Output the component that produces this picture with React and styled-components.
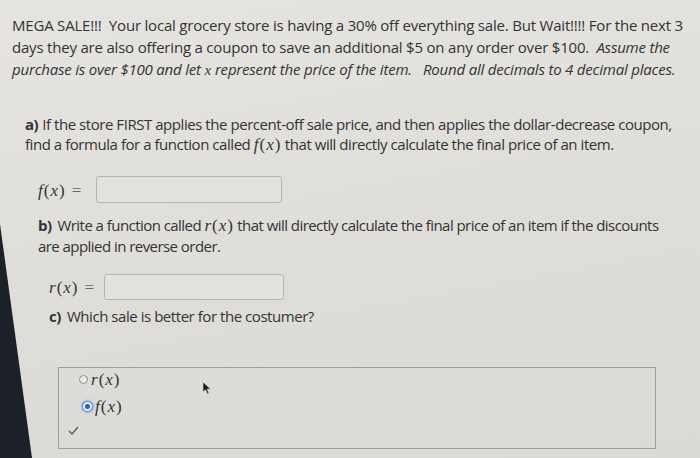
import React from "react";
import styled, { createGlobalStyle } from "styled-components";

const GlobalStyle = createGlobalStyle`
  html, body {
    margin: 0;
    padding: 0;
    background: #e0ded9;
  }
  body {
    font-family: "Open Sans", "Noto Sans", sans-serif;
    color: #333;
  }
`;

const Page = styled.div`
  position: relative;
  width: 700px;
  height: 458px;
  overflow: hidden;
  box-sizing: border-box;
  padding-top: 14px;
  background: linear-gradient(170deg, #e6e4e0 0%, #dfddd8 55%, #dcdad5 100%);
`;

// dark edge of the monitor bezel creeping in on the left of the photo
const Bezel = styled.div`
  position: absolute;
  left: 0;
  top: 0;
  width: 40px;
  height: 458px;
  background: #1c2029;
  clip-path: polygon(0 224px, 32px 458px, 0 458px);
`;

const Intro = styled.div`
  padding-left: 12px;
  font-size: 15px;
  line-height: 22px;
  letter-spacing: -0.2px;
  white-space: nowrap;
`;

const Line = styled.div`
  font-style: ${(p) => (p.$italic ? "italic" : "normal")};
`;

const Em = styled.span`
  font-style: italic;
`;

const Math = styled.span`
  font-family: "Liberation Serif", "DejaVu Serif", serif;
  font-style: italic;
  font-size: ${(p) => p.$size || 17}px;
  letter-spacing: ${(p) => (p.$size ? 0 : 1)}px;
  color: #333;
`;

const Paren = styled.span`
  font-style: normal;
`;

const Part = styled.div`
  margin-top: ${(p) => p.$top}px;
  padding-left: ${(p) => p.$left}px;
  font-size: 15px;
  line-height: 20px;
  letter-spacing: ${(p) => p.$spacing ?? -0.45}px;
  white-space: nowrap;
`;

const Tag = styled.b`
  font-weight: 700;
  margin-right: ${(p) => p.$gap || 3}px;
`;

const AnswerRow = styled.div`
  display: flex;
  align-items: center;
  margin-top: ${(p) => p.$top}px;
  padding-left: ${(p) => p.$left}px;
  height: ${(p) => p.$h}px;
`;

const Label = styled.div`
  width: ${(p) => p.$w}px;
  white-space: nowrap;
  color: #444;
`;

const Eq = styled.span`
  font-family: "Liberation Serif", serif;
  font-size: 17px;
  margin-left: 6px;
  color: #666;
`;

const Input = styled.div`
  box-sizing: border-box;
  width: ${(p) => p.$w}px;
  height: 100%;
  border: 1.5px solid #b5b4b0;
  border-radius: 3px;
  background: #e4e2de;
`;

const ChoiceBox = styled.div`
  position: relative;
  box-sizing: border-box;
  margin: 41px 0 0 58px;
  width: 598px;
  height: 82px;
  border: 1.5px solid #98a197;
  padding: 1px 0 0 20px;
`;

const Option = styled.div`
  display: flex;
  align-items: center;
  gap: 3px;
  height: 21px;
  margin-top: ${(p) => p.$top}px;
  padding-left: ${(p) => p.$indent}px;
`;

const Radio = styled.span`
  box-sizing: border-box;
  width: 9px;
  height: 9px;
  border-radius: 50%;
  border: ${(p) => (p.$on ? "2px solid #e8eefb" : "1px solid #8a8a8a")};
  background: ${(p) => (p.$on ? "#1f5fd6" : "#ecebe8")};
  box-shadow: ${(p) => (p.$on ? "0 0 0 1.5px #6f9ae9, 0 0 3px 2px #a9c3f0" : "none")};
`;

const Check = styled.svg`
  position: absolute;
  left: 9px;
  top: 58px;
`;

const Cursor = styled.svg`
  position: absolute;
  left: 143px;
  top: 13px;
`;

const Fx = ({ name }) => (
  <Math>
    {name}
    <Paren>(</Paren>x<Paren>)</Paren>
  </Math>
);

export default function App() {
  return (
    <>
      <GlobalStyle />
      <Page>
        <Bezel />
        <Intro>
          <Line>
            MEGA SALE!!!&nbsp; Your local grocery store is having a 30% off
            everything sale. But Wait!!!! For the next 3
          </Line>
          <Line>
            days they are also offering a coupon to save an additional $5 on
            any order over $100.&nbsp; <Em>Assume the</Em>
          </Line>
          <Line $italic>
            purchase is over $100 and let <Math $size={15}>x</Math> represent
            the price of the item.&nbsp;&nbsp; Round all decimals to 4 decimal
            places.
          </Line>
        </Intro>

        <Part $top={33} $left={25}>
          <Line>
            <Tag $gap={4}>a)</Tag>If the store FIRST applies the percent-off
            sale price, and then applies the dollar-decrease coupon,
          </Line>
          <Line>
            find a formula for a function called <Fx name="f" /> that will
            directly calculate the final price of an item.
          </Line>
        </Part>

        <AnswerRow $top={21} $left={38} $h={27}>
          <Label $w={58}>
            <Fx name="f" />
            <Eq>=</Eq>
          </Label>
          <Input $w={186} />
        </AnswerRow>

        <Part $top={12} $left={38} $spacing={-0.55}>
          <Line>
            <Tag $gap={6}>b)</Tag>Write a function called <Fx name="r" /> that
            will directly calculate the final price of an item if the discounts
          </Line>
          <Line>are applied in reverse order.</Line>
        </Part>

        <AnswerRow $top={18} $left={49} $h={26}>
          <Label $w={55}>
            <Fx name="r" />
            <Eq>=</Eq>
          </Label>
          <Input $w={180} />
        </AnswerRow>

        <Part $top={6} $left={49}>
          <Line>
            <Tag $gap={6}>c)</Tag>Which sale is better for the costumer?
          </Line>
        </Part>

        <ChoiceBox>
          <Option $top={0} $indent={0}>
            <Radio />
            <Fx name="r" />
          </Option>
          <Option $top={6} $indent={4}>
            <Radio $on />
            <Fx name="f" />
          </Option>
          <Check width="11" height="9" viewBox="0 0 11 9">
            <path
              d="M1 5 L4 8 L10 1"
              fill="none"
              stroke="#5a5f5a"
              strokeWidth="1.4"
            />
          </Check>
          <Cursor width="10" height="14" viewBox="0 0 10 14">
            <path
              d="M1 1 L1 11 L3.5 8.8 L5.5 13 L7 12.3 L5.2 8.2 L8.5 8 Z"
              fill="#1a1a1a"
              stroke="#e0ded9"
              strokeWidth="0.6"
            />
          </Cursor>
        </ChoiceBox>
      </Page>
    </>
  );
}
